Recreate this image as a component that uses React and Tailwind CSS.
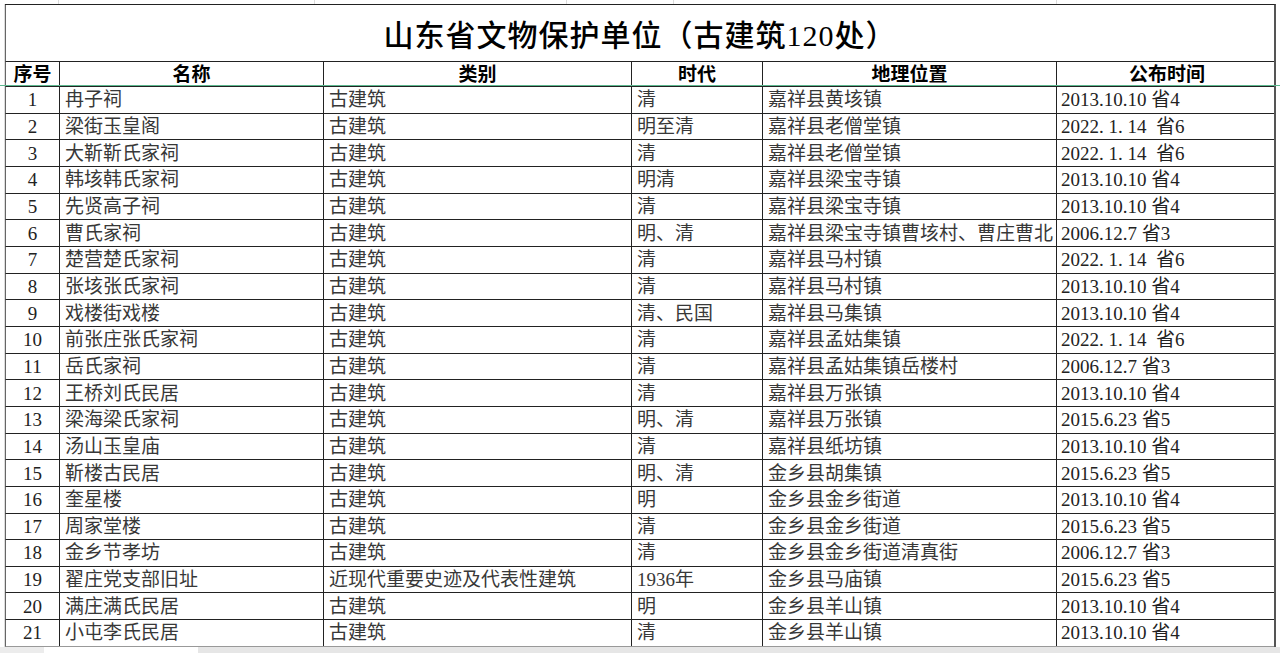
const rows = [
  ['1', '冉子祠', '古建筑', '清', '嘉祥县黄垓镇', '2013.10.10 省4'],
  ['2', '梁街玉皇阁', '古建筑', '明至清', '嘉祥县老僧堂镇', '2022. 1. 14  省6'],
  ['3', '大靳靳氏家祠', '古建筑', '清', '嘉祥县老僧堂镇', '2022. 1. 14  省6'],
  ['4', '韩垓韩氏家祠', '古建筑', '明清', '嘉祥县梁宝寺镇', '2013.10.10 省4'],
  ['5', '先贤高子祠', '古建筑', '清', '嘉祥县梁宝寺镇', '2013.10.10 省4'],
  ['6', '曹氏家祠', '古建筑', '明、清', '嘉祥县梁宝寺镇曹垓村、曹庄曹北', '2006.12.7 省3'],
  ['7', '楚营楚氏家祠', '古建筑', '清', '嘉祥县马村镇', '2022. 1. 14  省6'],
  ['8', '张垓张氏家祠', '古建筑', '清', '嘉祥县马村镇', '2013.10.10 省4'],
  ['9', '戏楼街戏楼', '古建筑', '清、民国', '嘉祥县马集镇', '2013.10.10 省4'],
  ['10', '前张庄张氏家祠', '古建筑', '清', '嘉祥县孟姑集镇', '2022. 1. 14  省6'],
  ['11', '岳氏家祠', '古建筑', '清', '嘉祥县孟姑集镇岳楼村', '2006.12.7 省3'],
  ['12', '王桥刘氏民居', '古建筑', '清', '嘉祥县万张镇', '2013.10.10 省4'],
  ['13', '梁海梁氏家祠', '古建筑', '明、清', '嘉祥县万张镇', '2015.6.23 省5'],
  ['14', '汤山玉皇庙', '古建筑', '清', '嘉祥县纸坊镇', '2013.10.10 省4'],
  ['15', '靳楼古民居', '古建筑', '明、清', '金乡县胡集镇', '2015.6.23 省5'],
  ['16', '奎星楼', '古建筑', '明', '金乡县金乡街道', '2013.10.10 省4'],
  ['17', '周家堂楼', '古建筑', '清', '金乡县金乡街道', '2015.6.23 省5'],
  ['18', '金乡节孝坊', '古建筑', '清', '金乡县金乡街道清真街', '2006.12.7 省3'],
  ['19', '翟庄党支部旧址', '近现代重要史迹及代表性建筑', '1936年', '金乡县马庙镇', '2015.6.23 省5'],
  ['20', '满庄满氏民居', '古建筑', '明', '金乡县羊山镇', '2013.10.10 省4'],
  ['21', '小屯李氏民居', '古建筑', '清', '金乡县羊山镇', '2013.10.10 省4'],
];

const headers = ['序号', '名称', '类别', '时代', '地理位置', '公布时间'];

const cols = 'grid grid-cols-[54px_264px_308px_131px_294px_220px]';

export default function App() {
  return (
    <div
      className="relative w-[1280px] h-[653px] overflow-hidden bg-white text-[#383838]"
      style={{ fontFamily: '"Liberation Serif", "Noto Sans CJK SC", serif' }}
    >
      {/* sheet gridlines above the table */}
      <div className="flex h-[4px] bg-white">
        <div className="w-[59px] border-r border-[#dcdcdc]" />
        <div className="w-[256px] border-r border-[#dcdcdc]" />
        <div className="w-[252px] border-r border-[#dcdcdc]" />
        <div className="w-[107px] border-r border-[#dcdcdc]" />
        <div className="w-[383px] border-r border-[#dcdcdc]" />
        <div className="flex-1" />
      </div>

      <div className="flex">
        <div className="w-[5px] border-r border-[#dcdcdc]" />
        <div className="w-[1271px] border-t border-[#222] border-r-2 border-r-[#555]">
          {/* title */}
          <div className="h-[57px] flex items-center justify-center pt-[4px] border-b border-[#222] border-l border-l-[#666]">
            <span className="text-[30px] font-medium text-black tracking-[1px]">
              山东省文物保护单位（古建筑120处）
            </span>
          </div>

          {/* header */}
          <div className={`${cols} h-[25px] border-b border-[#222] border-l border-l-[#666]`}>
            {headers.map((h, i) => (
              <div
                key={h}
                className={`flex items-center justify-center text-[19px] font-bold text-black leading-none ${i < 5 ? 'border-r border-[#222]' : ''}`}
              >
                {h}
              </div>
            ))}
          </div>

          {/* data rows */}
          {rows.map((r, ri) => (
            <div
              key={r[0]}
              className={`${cols} h-[26.67px] border-b border-l border-l-[#666] ${ri === 20 ? 'border-b-[#999]' : 'border-b-[#222]'}`}
            >
              {r.map((c, i) => (
                <div
                  key={i}
                  className={`flex items-center overflow-hidden whitespace-pre text-[19px] leading-none ${
                    i === 0 ? 'justify-center text-[#222]' : i === 5 ? 'pl-[4px] text-[#222]' : 'pl-[5px]'
                  } ${i < 5 ? 'border-r border-[#222]' : ''}`}
                >
                  {c}
                </div>
              ))}
            </div>
          ))}

          {/* partial next row */}
          <div className={`${cols} h-[8px] border-l border-l-[#666]`}>
            {headers.map((h, i) => (
              <div key={h} className={i < 5 ? 'border-r border-[#222]' : ''} />
            ))}
          </div>
        </div>
        <div className="flex-1" />
      </div>

      {/* frozen pane line */}
      <div className="absolute left-0 right-0 top-[85px] h-px bg-[#5cb88f]" />

      {/* horizontal scrollbar strip */}
      <div className="absolute left-0 right-0 bottom-0 h-[6px] flex">
        <div className="w-[44px] bg-[#ececec]" />
        <div className="w-[154px] bg-white" />
        <div className="flex-1 bg-[#e6e6e6]" />
      </div>
    </div>
  );
}
